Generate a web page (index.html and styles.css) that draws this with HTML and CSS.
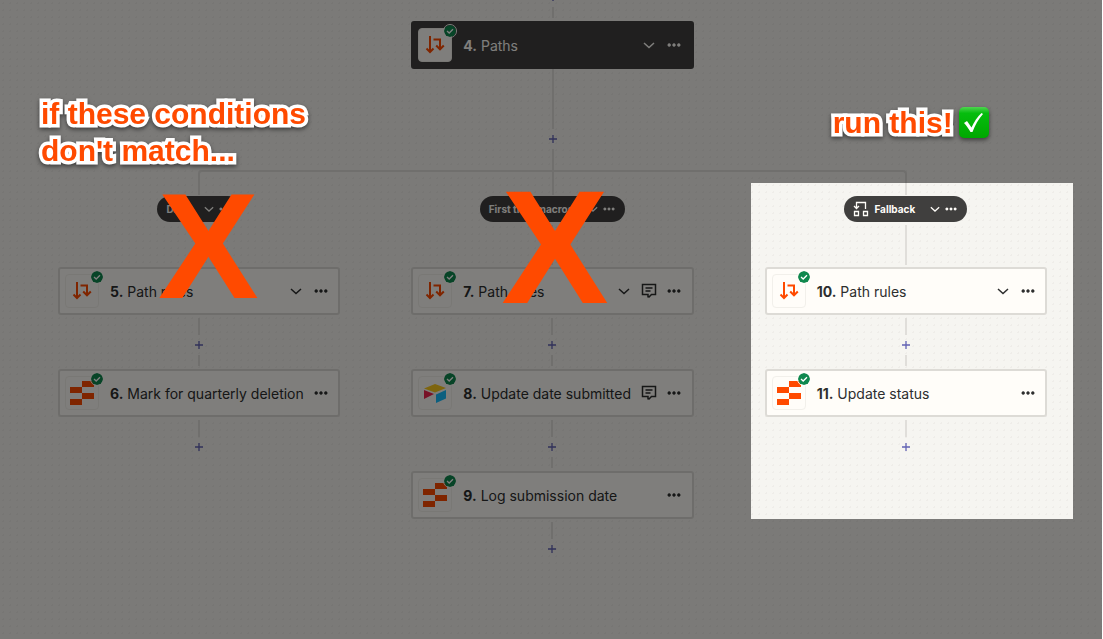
FILE: index.html
```html
<!DOCTYPE html>
<html lang="en">

<head>
    <meta charset="UTF-8">
    <title>Paths</title>
    <link rel="stylesheet" href="styles.css">
</head>

<body>
    <!-- Shared icons -->
    <svg class="sprite" aria-hidden="true">
        <symbol id="paths" viewBox="0 0 24 24">
            <path d="M7 3v16M3.500 15.500l3.500 3.500 3.500-3.500M10.500 6.500H17V16M13.200 12.500L17 16.300l3.800-3.800" fill="none" stroke="#ff4a00" stroke-width="2"/>
        </symbol>
        <symbol id="table" viewBox="0 0 24 24">
            <path d="M12 0h12v6H12zM0 6h12v6H0zM12 12h12v6H12zM0 18h12v6H0z" fill="#ff4a00"/>
        </symbol>
        <symbol id="airtable" viewBox="0 0 24 24">
            <path d="M1 7.500L12 3l11 4-11 4.500z" fill="#fcca1c"/>
            <path d="M1 9l10 4-10 5z" fill="#f0244f"/>
            <path d="M13 13.500L23 9v8.500L13 22z" fill="#18bfff"/>
        </symbol>
        <symbol id="check" viewBox="0 0 12 12">
            <circle cx="6" cy="6" r="6" fill="#0f884e"/>
            <path d="M3 6l2.200 2L9 4.200" fill="none" stroke="#fff" stroke-width="1.300"/>
        </symbol>
        <symbol id="chevron" viewBox="0 0 12 12">
            <path d="M1 4l5 4.500L11 4" fill="none" stroke="currentColor" stroke-width="1.500"/>
        </symbol>
        <symbol id="dots" viewBox="0 0 14 14">
            <path d="M2.200 5.300a1.700 1.700 0 1 0 .01 0zM7 5.300a1.700 1.700 0 1 0 .01 0zM11.800 5.300a1.700 1.700 0 1 0 .01 0z" fill="currentColor"/>
        </symbol>
        <symbol id="comment" viewBox="0 0 16 16">
            <path d="M7 14.500v-3H1.500v-10h13v10h-4l-3 3M4.500 5h7M4.500 8h5" fill="none" stroke="currentColor" stroke-width="1.500"/>
        </symbol>
        <symbol id="plus" viewBox="0 0 8 8">
            <path d="M4 0v8M0 4h8" stroke="currentColor" stroke-width="1.300"/>
        </symbol>
        <symbol id="fallback" viewBox="0 0 16 16">
            <path d="M1.500 10.500h4v4h-4zM10.500 10.500h4v4h-4zM12.500 8V1.500h-9V7M1 5l2.500 2.500L6 5" fill="none" stroke="currentColor" stroke-width="1.300"/>
        </symbol>
    </svg>

    <main class="canvas">
        <div class="trunk">
            <div class="connector first">
                <button class="add" aria-label="Add step"><svg><use href="#plus"/></svg></button>
                <span class="line short"></span>
            </div>
            <div class="card dark">
                <span class="app"><svg class="logo"><use href="#paths"/></svg><svg class="badge"><use href="#check"/></svg></span>
                <span class="title"><b>4.</b> Paths</span>
                <button aria-label="Collapse"><svg class="chevron"><use href="#chevron"/></svg></button>
                <button aria-label="More"><svg class="dots"><use href="#dots"/></svg></button>
            </div>
            <span class="line long"></span>
            <button class="add" aria-label="Add step"><svg><use href="#plus"/></svg></button>
            <span class="line stem"></span>
        </div>
        <div class="fork"><span class="line"></span></div>

        <div class="branches">
            <section class="branch">
                <div class="pill">
                    <span class="name">Date</span>
                    <button aria-label="Collapse"><svg class="chevron"><use href="#chevron"/></svg></button>
                    <button aria-label="More"><svg class="dots"><use href="#dots"/></svg></button>
                </div>
                <span class="line drop"></span>
                <div class="card">
                    <span class="app"><svg class="logo"><use href="#paths"/></svg><svg class="badge"><use href="#check"/></svg></span>
                    <span class="title"><b>5.</b> Path rules</span>
                    <button aria-label="Collapse"><svg class="chevron"><use href="#chevron"/></svg></button>
                    <button aria-label="More"><svg class="dots"><use href="#dots"/></svg></button>
                </div>
                <div class="connector">
                    <span class="line"></span>
                    <button class="add" aria-label="Add step"><svg><use href="#plus"/></svg></button>
                    <span class="line short"></span>
                </div>
                <div class="card">
                    <span class="app"><svg class="logo"><use href="#table"/></svg><svg class="badge"><use href="#check"/></svg></span>
                    <span class="title"><b>6.</b> Mark for quarterly deletion</span>
                    <button aria-label="More"><svg class="dots"><use href="#dots"/></svg></button>
                </div>
                <div class="connector">
                    <span class="line"></span>
                    <button class="add" aria-label="Add step"><svg><use href="#plus"/></svg></button>
                </div>
                <p class="note note-left">if these conditions<br>don't match...</p>
                <span class="cross cross-left">X</span>
            </section>

            <section class="branch">
                <div class="pill">
                    <span class="name">First time macros</span>
                    <button aria-label="Collapse"><svg class="chevron"><use href="#chevron"/></svg></button>
                    <button aria-label="More"><svg class="dots"><use href="#dots"/></svg></button>
                </div>
                <span class="line drop"></span>
                <div class="card">
                    <span class="app"><svg class="logo"><use href="#paths"/></svg><svg class="badge"><use href="#check"/></svg></span>
                    <span class="title"><b>7.</b> Path rules</span>
                    <button aria-label="Collapse"><svg class="chevron"><use href="#chevron"/></svg></button>
                    <button aria-label="Notes"><svg class="comment"><use href="#comment"/></svg></button>
                    <button aria-label="More"><svg class="dots"><use href="#dots"/></svg></button>
                </div>
                <div class="connector">
                    <span class="line"></span>
                    <button class="add" aria-label="Add step"><svg><use href="#plus"/></svg></button>
                    <span class="line short"></span>
                </div>
                <div class="card">
                    <span class="app"><svg class="logo"><use href="#airtable"/></svg><svg class="badge"><use href="#check"/></svg></span>
                    <span class="title"><b>8.</b> Update date submitted</span>
                    <button aria-label="Notes"><svg class="comment"><use href="#comment"/></svg></button>
                    <button aria-label="More"><svg class="dots"><use href="#dots"/></svg></button>
                </div>
                <div class="connector">
                    <span class="line"></span>
                    <button class="add" aria-label="Add step"><svg><use href="#plus"/></svg></button>
                    <span class="line short"></span>
                </div>
                <div class="card">
                    <span class="app"><svg class="logo"><use href="#table"/></svg><svg class="badge"><use href="#check"/></svg></span>
                    <span class="title"><b>9.</b> Log submission date</span>
                    <button aria-label="More"><svg class="dots"><use href="#dots"/></svg></button>
                </div>
                <div class="connector">
                    <span class="line"></span>
                    <button class="add" aria-label="Add step"><svg><use href="#plus"/></svg></button>
                </div>
                <span class="cross cross-middle">X</span>
            </section>

            <section class="branch">
                <div class="pill">
                    <svg class="kind"><use href="#fallback"/></svg>
                    <span class="name">Fallback</span>
                    <button aria-label="Collapse"><svg class="chevron"><use href="#chevron"/></svg></button>
                    <button aria-label="More"><svg class="dots"><use href="#dots"/></svg></button>
                </div>
                <span class="line drop"></span>
                <div class="card">
                    <span class="app"><svg class="logo"><use href="#paths"/></svg><svg class="badge"><use href="#check"/></svg></span>
                    <span class="title"><b>10.</b> Path rules</span>
                    <button aria-label="Collapse"><svg class="chevron"><use href="#chevron"/></svg></button>
                    <button aria-label="More"><svg class="dots"><use href="#dots"/></svg></button>
                </div>
                <div class="connector">
                    <span class="line"></span>
                    <button class="add" aria-label="Add step"><svg><use href="#plus"/></svg></button>
                    <span class="line short"></span>
                </div>
                <div class="card">
                    <span class="app"><svg class="logo"><use href="#table"/></svg><svg class="badge"><use href="#check"/></svg></span>
                    <span class="title"><b>11.</b> Update status</span>
                    <button aria-label="More"><svg class="dots"><use href="#dots"/></svg></button>
                </div>
                <div class="connector">
                    <span class="line"></span>
                    <button class="add" aria-label="Add step"><svg><use href="#plus"/></svg></button>
                </div>
                <div class="spotlight"></div>
                <p class="note note-right">run this!
                    <svg class="tick" viewBox="0 0 30 31">
                        <defs>
                            <linearGradient id="green" x1="0" y1="0" x2="0" y2="1">
                                <stop offset="0" stop-color="#4fd450"/>
                                <stop offset=".2" stop-color="#06bd0e"/>
                                <stop offset="1" stop-color="#00a800"/>
                            </linearGradient>
                        </defs>
                        <rect width="30" height="31" rx="5" fill="url(#green)"/>
                        <path d="M5 16l3-2 4.500 6.500C15 15 18.500 9.500 22.500 6l1.500 1c-4.500 5-8 11-10.500 18h-2C9.500 21.500 7.500 18.500 5 16z" fill="#fff" stroke="none"/>
                    </svg>
                </p>
            </section>
        </div>
    </main>
</body>

</html>
```
FILE: styles.css
```css
body {
    margin: 0;
    font-family: Inter, "Liberation Sans", sans-serif;
    font-size: 14px;
    color: #2d2e2e;
    background-color: #fff;
}

button {
    display: flex;
    align-items: center;
    justify-content: center;
    padding: 0;
    border: 0;
    background: none;
    color: inherit;
}

.sprite {
    position: absolute;
    width: 0;
    height: 0;
}

.canvas {
    position: relative;
    box-sizing: border-box;
    min-height: 100vh;
    margin-right: 1px;
    padding: 0 55px 0 58px;
    overflow: hidden;
    background-color: #f6f5f1;
    background-image: radial-gradient(#efede9 1px, transparent 1px);
    background-size: 7px 7px;
}

/* Trunk and connecting lines */
.trunk,
.connector,
.branch {
    display: flex;
    flex-direction: column;
    align-items: center;
}

.line {
    width: 2px;
    height: 17px;
    background-color: #e0deda;
}

.line.short {
    height: 11px;
}

.line.long {
    height: 60px;
}

.line.stem {
    height: 21px;
}

.line.drop {
    height: 40px;
    margin: 3px 0 2px;
}

.connector {
    padding: 3px 0;
}

.connector.first {
    margin-top: -13px;
    padding-top: 0;
}

.add {
    width: 20px;
    height: 20px;
    color: #6262b4;
}

.add svg {
    width: 8px;
    height: 8px;
}

.fork {
    display: flex;
    justify-content: center;
    height: 23px;
    margin: 0 calc((100% - 142px) / 6 - 1px) 1px;
    border: 2px solid #e0deda;
    border-bottom: 0;
    border-radius: 4px 4px 0 0;
}

.fork .line {
    height: 23px;
}

.branches {
    display: grid;
    grid-template-columns: repeat(3, 1fr);
    gap: 71px;
}

.branch {
    position: relative;
}

/* Steps */
.card {
    display: flex;
    align-items: center;
    box-sizing: border-box;
    width: 100%;
    height: 48px;
    padding: 0 5px;
    border: 2px solid #dddbd6;
    border-radius: 3px;
    background-color: #fffdf9;
}

.trunk .card {
    width: calc((100% - 142px) / 3);
}

.card.dark {
    border-color: #403f3e;
    background-color: #403f3e;
    color: #fffdf9;
}

.card button {
    width: 25px;
    height: 25px;
}

.app {
    position: relative;
    display: flex;
    align-items: center;
    justify-content: center;
    box-sizing: border-box;
    width: 34px;
    height: 34px;
    border: 1px solid #f2f0eb;
    border-radius: 4px;
    background-color: #fffdf9;
}

.logo {
    width: 24px;
    height: 24px;
}

.badge {
    position: absolute;
    top: -5px;
    right: -6px;
    width: 12px;
    height: 12px;
    border: 1px solid #fffdf9;
    border-radius: 50%;
}

.title {
    flex: 1;
    margin-left: 11px;
    white-space: nowrap;
}

.chevron {
    width: 12px;
    height: 12px;
}

.dots {
    width: 14px;
    height: 14px;
}

.comment {
    width: 16px;
    height: 16px;
}

/* Branch names */
.pill {
    display: flex;
    align-items: center;
    height: 26px;
    padding: 0 8px 0 9px;
    border-radius: 13px;
    background-color: #403f3e;
    color: #fffdf9;
    font-size: 10px;
    font-weight: 700;
}

.pill button {
    width: 16px;
    height: 16px;
}

.pill .name {
    margin-right: 12px;
}

.pill .chevron {
    width: 10px;
    height: 10px;
}

.pill .dots {
    width: 12px;
    height: 12px;
}

.kind {
    width: 16px;
    height: 16px;
    margin-right: 5px;
}

/* Everything outside the spotlight is dimmed */
.spotlight {
    position: absolute;
    top: -13px;
    left: -14px;
    right: -26px;
    height: 336px;
    box-shadow: 0 0 0 2000px rgba(0, 0, 0, 0.5);
    pointer-events: none;
}

.note {
    position: absolute;
    z-index: 1;
    margin: 0;
    font: 700 30px/37px "Liberation Sans", sans-serif;
    color: #ff4a00;
    white-space: nowrap;
    -webkit-text-stroke: 7px #fff;
    paint-order: stroke fill;
    stroke-linejoin: round;
    filter: drop-shadow(0 2px 2px rgba(0, 0, 0, 0.5));
}

.note-left {
    top: -101px;
    left: -17px;
}

.note-right {
    display: flex;
    align-items: center;
    gap: 6px;
    top: -92px;
    left: 68px;
}

.tick {
    width: 30px;
    height: 31px;
}

.cross {
    position: absolute;
    z-index: 1;
    font-family: "Liberation Sans", sans-serif;
    font-weight: 700;
    line-height: 1;
    color: #ff4a00;
}

.cross-left {
    top: -26px;
    left: 100px;
    font-size: 151px;
}

.cross-middle {
    top: -29px;
    left: 90px;
    font-size: 161px;
}
```
